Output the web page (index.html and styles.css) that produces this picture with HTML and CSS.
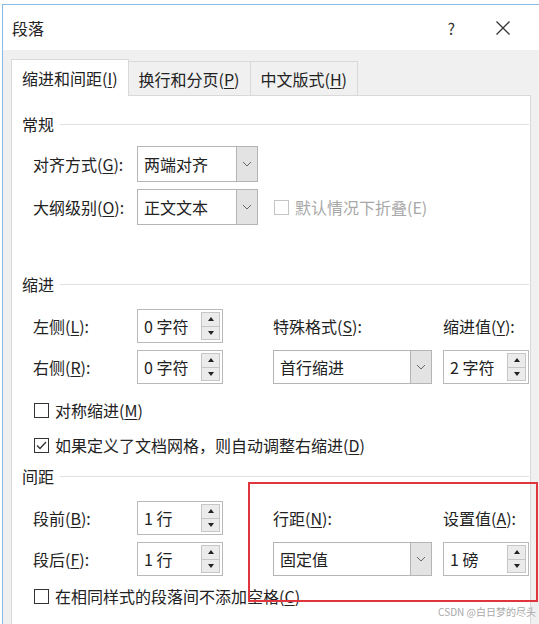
FILE: index.html
```html
<!DOCTYPE html>
<html lang="zh-CN">
<head>
    <meta charset="UTF-8">
    <meta name="viewport" content="width=device-width, initial-scale=1.0">
    <title>段落</title>
    <link rel="stylesheet" href="styles.css">
</head>
<body>
    <div class="window">
        <div class="titlebar">
            <span class="title">段落</span>
            <span class="help">?</span>
            <svg class="close" width="16" height="16" viewBox="0 0 16 16">
                <path d="M1.5 1.5 L14.5 14.5 M14.5 1.5 L1.5 14.5" stroke="#333" stroke-width="1.3" fill="none"/>
            </svg>
        </div>
        <div class="content">
            <div class="tabs">
                <div class="tab active">缩进和间距(<u>I</u>)</div>
                <div class="tab">换行和分页(<u>P</u>)</div>
                <div class="tab">中文版式(<u>H</u>)</div>
            </div>
            <div class="panel">
                <div class="group-title first"><span>常规</span></div>
                <div class="general">
                    <label>对齐方式(<u>G</u>):</label>
                    <div class="select small"><span>两端对齐</span><i class="drop"><svg width="10" height="6" viewBox="0 0 10 6"><path d="M1 1 L5 5 L9 1" stroke="#666" fill="none"/></svg></i></div>
                    <div></div>
                    <label>大纲级别(<u>O</u>):</label>
                    <div class="select small"><span>正文文本</span><i class="drop"><svg width="10" height="6" viewBox="0 0 10 6"><path d="M1 1 L5 5 L9 1" stroke="#666" fill="none"/></svg></i></div>
                    <div class="check disabled"><span class="box"></span>默认情况下折叠(E)</div>
                </div>

                <div class="group-title indent-title"><span>缩进</span></div>
                <div class="fields">
                    <label>左侧(<u>L</u>):</label>
                    <div class="spin"><span>0 字符</span><div class="arrows"><b class="up"></b><b class="down"></b></div></div>
                    <label>特殊格式(<u>S</u>):</label>
                    <label>缩进值(<u>Y</u>):</label>
                    <label>右侧(<u>R</u>):</label>
                    <div class="spin"><span>0 字符</span><div class="arrows"><b class="up"></b><b class="down"></b></div></div>
                    <div class="select wide"><span>首行缩进</span><i class="drop"><svg width="10" height="6" viewBox="0 0 10 6"><path d="M1 1 L5 5 L9 1" stroke="#666" fill="none"/></svg></i></div>
                    <div class="spin"><span>2 字符</span><div class="arrows"><b class="up"></b><b class="down"></b></div></div>
                </div>
                <div class="check first-check"><span class="box"></span>对称缩进(<u>M</u>)</div>
                <div class="check next-check"><span class="box"><svg width="13" height="13" viewBox="0 0 13 13"><path d="M2 6.5 L5 9.5 L11 3" stroke="#333" stroke-width="1.3" fill="none"/></svg></span>如果定义了文档网格，则自动调整右缩进(<u>D</u>)</div>

                <div class="group-title spacing-title"><span>间距</span></div>
                <div class="fields">
                    <label>段前(<u>B</u>):</label>
                    <div class="spin"><span>1 行</span><div class="arrows"><b class="up"></b><b class="down"></b></div></div>
                    <label>行距(<u>N</u>):</label>
                    <label>设置值(<u>A</u>):</label>
                    <label>段后(<u>F</u>):</label>
                    <div class="spin"><span>1 行</span><div class="arrows"><b class="up"></b><b class="down"></b></div></div>
                    <div class="select wide"><span>固定值</span><i class="drop"><svg width="10" height="6" viewBox="0 0 10 6"><path d="M1 1 L5 5 L9 1" stroke="#666" fill="none"/></svg></i></div>
                    <div class="spin"><span>1 磅</span><div class="arrows"><b class="up"></b><b class="down"></b></div></div>
                </div>
                <div class="check spacing-check"><span class="box"></span>在相同样式的段落间不添加空格(<u>C</u>)</div>
                <div class="check next-check"><span class="box"></span>如果定义了文档网格，则对齐到网格(<u>W</u>)</div>
            </div>
        </div>
    </div>

    <div class="highlight"></div>
    <div class="watermark">CSDN @白日梦的尽头</div>
</body>
</html>
```

FILE: styles.css
```css
body {
    margin: 0;
    height: 624px;
    overflow: hidden;
    position: relative;
    background: #fff;
    font-family: "Noto Sans CJK SC", "Noto Sans", sans-serif;
    font-size: 16px;
    color: #222;
}
u {
    text-decoration-thickness: 1px;
    text-underline-offset: 2px;
}
.window {
    margin: 4px 0 0 2px;
    height: 620px;
    border-top: 1px solid #86bbe8;
    border-left: 1px solid #86bbe8;
    background: #f0f0f0;
    overflow: hidden;
}
.titlebar {
    height: 45px;
    display: flex;
    align-items: center;
    padding-left: 9px;
    background: #fff;
}
.title {
    flex: 1;
}
.help {
    margin-right: 40px;
    color: #333;
}
.close {
    margin-right: 28px;
}
.content {
    padding: 9px 0 0 8px;
}

/* Tabs */
.tabs {
    display: flex;
    align-items: flex-end;
    height: 36px;
}
.tab {
    height: 34px;
    line-height: 34px;
    padding: 0 10px;
    box-sizing: border-box;
    border: 1px solid #d9d9d9;
    border-bottom: none;
    border-left: none;
    background: #f0f0f0;
}
.tab.active {
    height: 37px;
    line-height: 36px;
    margin-bottom: -1px;
    border-left: 1px solid #d9d9d9;
    background: #fff;
    position: relative;
}
.panel {
    width: 520px;
    height: 540px;
    padding: 18px 0 0 10px;
    box-sizing: border-box;
    background: #fff;
    border: 1px solid #d9d9d9;
}

/* Group titles */
.group-title {
    display: flex;
    align-items: center;
    gap: 6px;
    height: 20px;
    line-height: 20px;
    margin-right: 1px;
}
.group-title::after {
    content: "";
    flex: 1;
    height: 1px;
    background: #e0e0e0;
}
.indent-title {
    margin-top: 49px;
}
.spacing-title {
    margin-top: 9px;
}

/* Rows */
.general {
    display: grid;
    grid-template-columns: 104px 137px 1fr;
    grid-auto-rows: 36px;
    row-gap: 7px;
    margin: 12px 0 0 11px;
}
.fields {
    display: grid;
    grid-template-columns: 104px 136px 170px 86px;
    grid-auto-rows: 34px;
    row-gap: 7px;
    margin: 15px 0 0 11px;
}
label {
    align-self: center;
    line-height: 20px;
}

/* Dropdowns */
.select {
    display: flex;
    box-sizing: border-box;
    border: 1px solid #b4b4b4;
    background: #fff;
}
.select.small {
    width: 121px;
}
.select.wide {
    width: 159px;
}
.select span {
    flex: 1;
    padding-left: 6px;
    align-self: center;
    line-height: 20px;
}
.drop {
    width: 20px;
    display: flex;
    align-items: center;
    justify-content: center;
    border-left: 1px solid #b4b4b4;
    background: #e3e3e3;
}

/* Spin boxes */
.spin {
    width: 86px;
    display: flex;
    box-sizing: border-box;
    border: 1px solid #b9b9b9;
    background: #fff;
}
.spin span {
    flex: 1;
    padding-left: 6px;
    align-self: center;
    line-height: 20px;
}
.arrows {
    width: 19px;
    margin: 2px 2px 2px 0;
    display: flex;
    flex-direction: column;
}
.arrows b {
    flex: 1;
    box-sizing: border-box;
    border: 1px solid #c6c6c6;
    background: #ebebeb;
    display: flex;
    align-items: center;
    justify-content: center;
}
.arrows b + b {
    border-top: none;
}
.arrows b::after {
    content: "";
    border-left: 3.5px solid transparent;
    border-right: 3.5px solid transparent;
}
.arrows .up::after {
    border-bottom: 4px solid #222;
}
.arrows .down::after {
    border-top: 4px solid #222;
}

/* Checkboxes */
.check {
    display: flex;
    align-items: center;
    height: 24px;
    line-height: 20px;
    margin-left: 12px;
}
.general .check {
    margin-left: 0;
    align-self: center;
}
.box {
    width: 15px;
    height: 15px;
    box-sizing: border-box;
    border: 1px solid #333;
    background: #fff;
    margin-right: 6px;
    display: flex;
    align-items: center;
    justify-content: center;
}
.check.disabled {
    color: #a8a8a8;
}
.check.disabled .box {
    border-color: #c4c4c4;
}
.first-check {
    margin-top: 14px;
}
.next-check {
    margin-top: 11px;
}
.spacing-check {
    margin-top: 8px;
}

/* Screenshot annotations */
.highlight {
    position: absolute;
    left: 248px;
    top: 482px;
    width: 290px;
    height: 120px;
    box-sizing: border-box;
    border: 2px solid #e0353c;
}
.watermark {
    position: absolute;
    right: 3px;
    top: 604px;
    font-size: 10px;
    color: #a8a8a8;
}
```
